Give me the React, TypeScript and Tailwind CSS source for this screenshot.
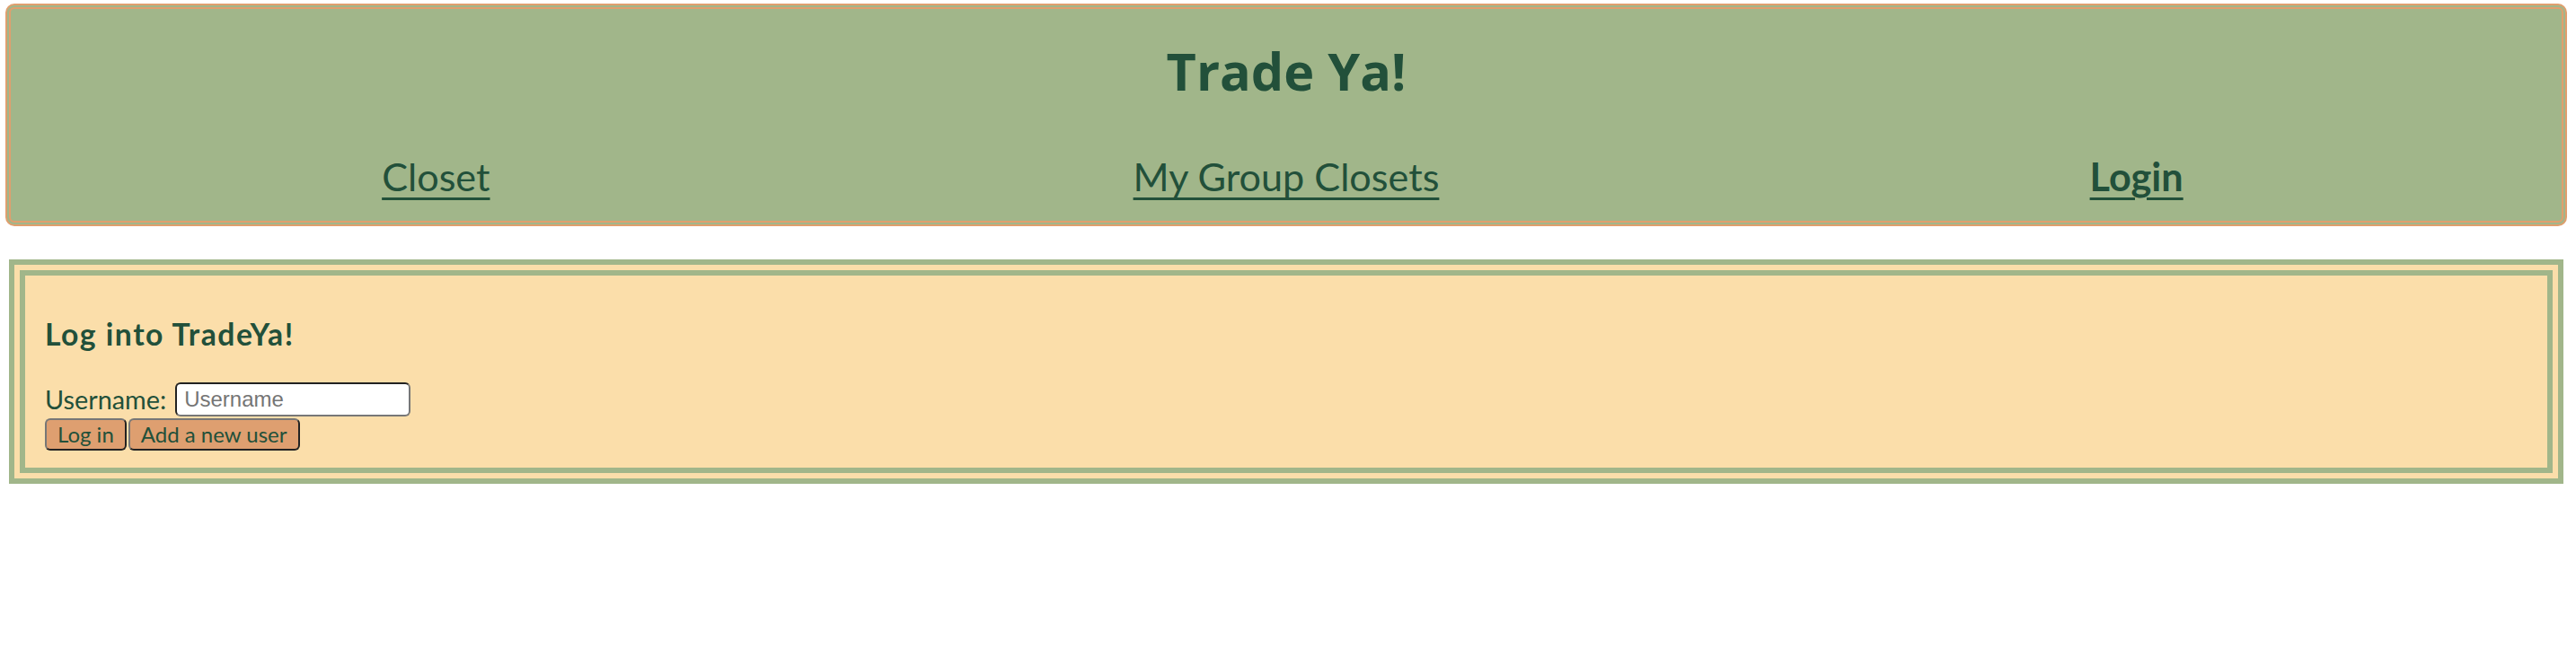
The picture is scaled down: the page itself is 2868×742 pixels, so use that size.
import React from "react";

const green = "text-[#22503a]";

const NavLink: React.FC<{ label: string; bold?: boolean }> = ({ label, bold }) => (
  <div className="flex justify-center">
    <a
      href="#"
      className={`${green} text-[43.2px] leading-[50px] underline decoration-[3px] underline-offset-[7px] ${
        bold ? "font-bold" : ""
      }`}
    >
      {label}
    </a>
  </div>
);

export default function App() {
  return (
    <div className="font-['Lato',sans-serif] bg-white min-h-[742px] pt-[4px]">
      {/* header */}
      <header className="ml-[6px] mr-[10px] border-[6px] border-double border-[#e09f6e] rounded-[10px] bg-[#a1b68a] pt-[36px] pb-[25px]">
        <h1 className={`${green} font-['Open_Sans',sans-serif] text-center text-[57.6px] font-bold leading-[66px]`}>
          Trade Ya!
        </h1>
        <nav className="grid grid-cols-3 mt-[59px]">
          <NavLink label="Closet" />
          <NavLink label="My Group Closets" />
          <NavLink label="Login" bold />
        </nav>
      </header>

      {/* login box */}
      <section className="ml-[10px] mr-[14px] mt-[37px] border-[18px] border-double border-[#a1b68a] bg-[#fbdeaa] pl-[22px] pt-[45px] pb-[19px]">
        <h3 className={`${green} text-[33.7px] font-bold leading-[40px] tracking-[1.5px]`}>
          Log into TradeYa!
        </h3>
        <div className="flex items-center gap-[10px] mt-[34px] h-[38px]">
          <label className={`${green} text-[28.8px] leading-[38px]`}>Username:</label>
          <input
            placeholder="Username"
            className="w-[262px] h-[38px] bg-white border-2 border-t-[#222] border-l-[#222] border-b-[#777] border-r-[#777] rounded-[6px] px-[8px] text-[24px] font-['Liberation_Sans',sans-serif] placeholder:text-[#757575] outline-none"
          />
        </div>
        <div className="flex gap-[2px] mt-[2px]">
          <button className={`${green} h-[36px] px-[12px] text-[24px] leading-[30px] bg-[#de9f70] border-2 border-t-[#777] border-l-[#777] border-b-[#222] border-r-[#222] rounded-[6px]`}>
            Log in
          </button>
          <button className={`${green} h-[36px] px-[12px] text-[24px] leading-[30px] bg-[#de9f70] border-2 border-t-[#777] border-l-[#777] border-b-[#222] border-r-[#222] rounded-[6px]`}>
            Add a new user
          </button>
        </div>
      </section>
    </div>
  );
}
